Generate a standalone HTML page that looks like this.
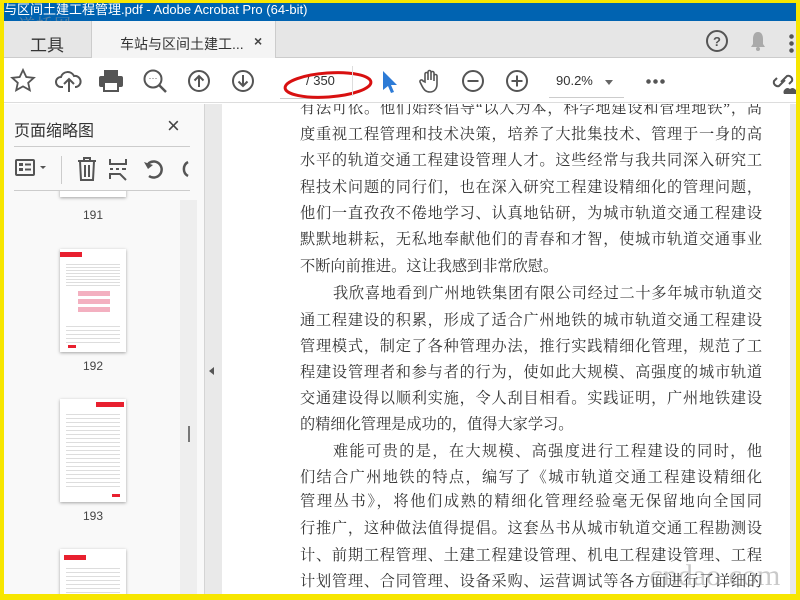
<!DOCTYPE html>
<html><head><meta charset="utf-8"><style>
*{margin:0;padding:0;box-sizing:border-box}
body{width:800px;height:600px;overflow:hidden;background:#f7e600;font-family:"Liberation Sans","Noto Sans CJK SC",sans-serif;position:relative}
.abs{position:absolute}
#win{position:absolute;left:4px;top:3px;width:792px;height:591px;background:#fff;overflow:hidden}
#title{left:0;top:0;width:792px;height:18px;background:#0063b1;color:#fff;font-size:13px;line-height:14px;white-space:nowrap;overflow:hidden}
#tabs{left:0;top:18px;width:792px;height:37px;background:#e6e6e6;border-bottom:1px solid #ccc}
#tb{left:0;top:55px;width:792px;height:45px;background:#fff;border-bottom:1px solid #ddd}
.ic{position:absolute}
#lp{left:0;top:101px;width:200px;height:490px;background:#f9f9f9}
#div{left:200px;top:101px;width:18px;height:490px;background:#e9e9e9;border-left:1px solid #d4d4d4}
#page{left:218px;top:101px;width:568px;height:490px;background:#fff;overflow:hidden}
#rg{left:786px;top:101px;width:6px;height:490px;background:#e9e9e9}
.ln{position:absolute;left:78px;width:462px;height:26px;font-family:"Liberation Serif","Noto Serif CJK SC",serif;font-size:15.2px;line-height:26px;color:#333;text-align:justify;text-align-last:justify;white-space:nowrap}
.nl{text-align-last:left;letter-spacing:0}
.in{padding-left:33px}
.th{position:absolute;left:56px;width:66px;height:103px;background:#fff;box-shadow:0 1px 3px rgba(0,0,0,.35)}
.lbl{position:absolute;left:56px;width:66px;text-align:center;font-size:12px;color:#444}
#list{position:absolute;left:0;top:87px;width:200px;height:403px;overflow:hidden}
</style></head><body>
<div id="win">
<div id="title" class="abs">与区间土建工程管理.pdf - Adobe Acrobat Pro (64-bit)</div>
<div class="abs" style="left:14px;top:8px;font-size:17px;color:#999;font-family:'Noto Serif CJK SC',serif;letter-spacing:1px;opacity:.6">道桥网</div>
<div id="tabs" class="abs">
  <div class="abs" style="left:0;top:0;width:88px;height:37px;border-right:1px solid #ccc"></div>
  <div class="abs" style="left:26px;top:10px;font-size:17px;color:#333">工具</div>
  <div class="abs" style="left:88px;top:0;width:184px;height:38px;background:#f4f4f4;border-right:1px solid #ccc"></div>
  <div class="abs" style="left:116px;top:13px;font-size:14px;color:#333">车站与区间土建工...</div>
  <div class="abs" style="left:250px;top:12px;font-size:14px;color:#444;font-weight:bold">×</div>
  <svg class="ic" style="left:701px;top:8px" width="24" height="24"><circle cx="12" cy="12" r="10" fill="none" stroke="#555" stroke-width="2"/><text x="12" y="17" font-size="13" font-weight="bold" text-anchor="middle" fill="#555" font-family="Liberation Sans">?</text></svg>
  <svg class="ic" style="left:744px;top:9px" width="20" height="22"><path d="M10 2c-4 0-5 4-5 7v5l-2 3h14l-2-3V9c0-3-1-7-5-7z" fill="#aaa"/><circle cx="10" cy="19" r="2" fill="#aaa"/></svg>
  <div class="abs" style="left:785px;top:12px;width:5px;height:20px;background:radial-gradient(circle,#555 2px,transparent 2.5px) 0 0/5px 7px"></div>
</div>
<div id="tb" class="abs">
  <svg class="ic" style="left:6px;top:10px" width="26" height="26"><path d="M13 2l3.3 7 7.5.8-5.6 5 1.6 7.4L13 18.4l-6.8 3.8 1.6-7.4-5.6-5 7.5-.8z" fill="none" stroke="#555" stroke-width="1.8"/></svg>
  <svg class="ic" style="left:51px;top:10px" width="28" height="26"><path d="M8 19H6a5 5 0 0 1 0-10 7 7 0 0 1 13-1 5.5 5.5 0 0 1 2 11h-1" fill="none" stroke="#555" stroke-width="2"/><path d="M14 24V12M9 16l5-5 5 5" fill="none" stroke="#555" stroke-width="2"/></svg>
  <svg class="ic" style="left:94px;top:10px" width="26" height="26"><rect x="6" y="2" width="14" height="6" fill="#555"/><rect x="1" y="8" width="24" height="11" rx="2" fill="#555"/><rect x="6" y="14" width="14" height="9" fill="#fff" stroke="#555" stroke-width="2"/></svg>
  <svg class="ic" style="left:138px;top:10px" width="28" height="28"><circle cx="11" cy="11" r="8.5" fill="none" stroke="#555" stroke-width="2"/><path d="M17 17l7 7" stroke="#555" stroke-width="2.5"/><text x="11" y="13" font-size="9" text-anchor="middle" fill="#555">···</text></svg>
  <svg class="ic" style="left:183px;top:11px" width="24" height="24"><circle cx="12" cy="12" r="10" fill="none" stroke="#555" stroke-width="2"/><path d="M12 18V7M7.5 11.5L12 7l4.5 4.5" fill="none" stroke="#555" stroke-width="2"/></svg>
  <svg class="ic" style="left:227px;top:11px" width="24" height="24"><circle cx="12" cy="12" r="10" fill="none" stroke="#555" stroke-width="2"/><path d="M12 6v11M7.5 12.5L12 17l4.5-4.5" fill="none" stroke="#555" stroke-width="2"/></svg>
  <div class="abs" style="left:276px;top:40px;width:40px;height:1px;background:#ccc"></div>
  <div class="abs" style="left:302px;top:15px;font-size:13px;color:#333">/ 350</div>
  <svg class="ic" style="left:278px;top:10px" width="96" height="34"><ellipse cx="46" cy="17" rx="43" ry="12" fill="none" stroke="#d81010" stroke-width="3" transform="rotate(-4 46 17)"/></svg>
  <div class="abs" style="left:348px;top:8px;width:1px;height:30px;background:#ddd"></div>
  <svg class="ic" style="left:375px;top:11px" width="20" height="26"><path d="M4 2v19l5-4 3 7 3-1-3-7h6z" fill="#2d7bd6"/></svg>
  <svg class="ic" style="left:414px;top:10px" width="26" height="26"><path d="M7 14V6a1.5 1.5 0 0 1 3 0v6V4a1.5 1.5 0 0 1 3 0v8V5a1.5 1.5 0 0 1 3 0v8V8a1.5 1.5 0 0 1 3 0v8c0 5-3 8-7 8s-6-2-8-6l-2-4a1.5 1.5 0 0 1 3-1z" fill="none" stroke="#555" stroke-width="1.6"/></svg>
  <svg class="ic" style="left:457px;top:11px" width="24" height="24"><circle cx="12" cy="12" r="10" fill="none" stroke="#555" stroke-width="2"/><path d="M6.5 12h11" stroke="#555" stroke-width="2"/></svg>
  <svg class="ic" style="left:501px;top:11px" width="24" height="24"><circle cx="12" cy="12" r="10" fill="none" stroke="#555" stroke-width="2"/><path d="M6.5 12h11M12 6.5v11" stroke="#555" stroke-width="2"/></svg>
  <div class="abs" style="left:552px;top:15px;font-size:13px;color:#333">90.2%</div>
  <div class="abs" style="left:601px;top:22px;border:4px solid transparent;border-top:5px solid #666"></div>
  <div class="abs" style="left:545px;top:39px;width:75px;height:1px;background:#ccc"></div>
  <div class="abs" style="left:641px;top:21px;width:20px;height:5px;background:radial-gradient(circle,#555 2px,transparent 2.5px) 0 0/7px 5px"></div>
  <svg class="ic" style="left:768px;top:10px" width="24" height="28"><path d="M9 14l6-6a4 4 0 0 1 5 5l-3 3M13 12l-6 6a4 4 0 0 1-5-5l3-3" fill="none" stroke="#555" stroke-width="2"/><path d="M12 26a4 4 0 0 1 6-5 4 4 0 0 1 6 5z" fill="#555"/></svg>
</div>
<div id="lp" class="abs">
  <div class="abs" style="left:10px;top:13px;font-size:16px;color:#333">页面缩略图</div>
  <div class="abs" style="left:163px;top:9px;font-size:22px;color:#444">×</div>
  <div class="abs" style="left:10px;top:42px;width:176px;height:1px;background:#ccc"></div>
  <svg class="ic" style="left:10px;top:52px" width="36" height="24"><rect x="2" y="4" width="18" height="15" rx="1" fill="none" stroke="#555" stroke-width="2"/><rect x="5" y="7" width="4" height="3" fill="#555"/><rect x="5" y="12" width="4" height="3" fill="#555"/><path d="M11 8.5h6M11 13.5h6" stroke="#555" stroke-width="2"/><path d="M26 10l3 3 3-3z" fill="#555"/></svg>
  <div class="abs" style="left:57px;top:52px;width:1px;height:28px;background:#ccc"></div>
  <svg class="ic" style="left:72px;top:52px" width="22" height="26"><path d="M2 5h18M8 5V2h6v3M4 5l1 19h12l1-19M9 9v12M13 9v12" fill="none" stroke="#555" stroke-width="2"/></svg>
  <svg class="ic" style="left:104px;top:53px" width="22" height="24"><path d="M2 2v5h16V2M2 22v-5h10l6 6M2 12h3M8 12h3M14 12h4" fill="none" stroke="#555" stroke-width="2"/></svg>
  <svg class="ic" style="left:138px;top:54px" width="24" height="22"><path d="M7 18a8 8 0 1 0 0-13L5 8" fill="none" stroke="#555" stroke-width="2.5"/><path d="M2 4l4 7 5-4z" fill="#555"/></svg>
  <svg class="ic" style="left:172px;top:54px" width="14" height="22"><path d="M12 4a8 8 0 0 0 0 14" fill="none" stroke="#555" stroke-width="2.5"/></svg>
  <div class="abs" style="left:10px;top:86px;width:176px;height:1px;background:#ccc"></div>
  <div id="list">
  <div class="abs" style="left:176px;top:9px;width:17px;height:394px;background:#eee"></div>
  <div class="abs" style="left:184px;top:235px;width:2px;height:16px;background:#777"></div>
  <div class="th" style="top:-30px;height:36px"></div>
  <div class="lbl" style="top:17px">191</div>
  <div class="th" style="top:58px"><div class="abs" style="left:0;top:3px;width:22px;height:5px;background:#e8202f"></div><div class="abs" style="left:6px;top:13px;width:54px;height:24px;background:repeating-linear-gradient(#fff 0 2px,#ddd 2px 3px)"></div><div class="abs" style="left:18px;top:42px;width:32px;height:24px;background:repeating-linear-gradient(#f3b0c0 0 5px,#fff 5px 8px)"></div><div class="abs" style="left:6px;top:74px;width:54px;height:20px;background:repeating-linear-gradient(#fff 0 3px,#ddd 3px 4px)"></div><div class="abs" style="left:8px;top:96px;width:8px;height:3px;background:#e8202f"></div></div>
  <div class="lbl" style="top:168px">192</div>
  <div class="th" style="top:208px"><div class="abs" style="left:36px;top:3px;width:28px;height:5px;background:#e8202f"></div><div class="abs" style="left:6px;top:12px;width:54px;height:76px;background:repeating-linear-gradient(#fff 0 3px,#ddd 3px 4px)"></div><div class="abs" style="left:52px;top:95px;width:8px;height:3px;background:#e8202f"></div></div>
  <div class="lbl" style="top:318px">193</div>
  <div class="th" style="top:358px"><div class="abs" style="left:4px;top:6px;width:22px;height:5px;background:#e8202f"></div><div class="abs" style="left:6px;top:16px;width:54px;height:60px;background:repeating-linear-gradient(#fff 0 3px,#ddd 3px 4px)"></div></div>
  </div>
</div>
<div id="div" class="abs"><div class="abs" style="left:4px;top:263px;border:4px solid transparent;border-right:5px solid #555;border-left:0"></div></div>
<div id="page" class="abs">
<div class="ln" style="top:-8px">有法可依。他们始终倡导“以人为本，科学地建设和管理地铁”，高</div>
<div class="ln" style="top:18px">度重视工程管理和技术决策，培养了大批集技术、管理于一身的高</div>
<div class="ln" style="top:44px">水平的轨道交通工程建设管理人才。这些经常与我共同深入研究工</div>
<div class="ln" style="top:71px">程技术问题的同行们，也在深入研究工程建设精细化的管理问题，</div>
<div class="ln" style="top:97px">他们一直孜孜不倦地学习、认真地钻研，为城市轨道交通工程建设</div>
<div class="ln" style="top:123px">默默地耕耘，无私地奉献他们的青春和才智，使城市轨道交通事业</div>
<div class="ln nl" style="top:150px">不断向前推进。这让我感到非常欣慰。</div>
<div class="ln in" style="top:177px">我欣喜地看到广州地铁集团有限公司经过二十多年城市轨道交</div>
<div class="ln" style="top:204px">通工程建设的积累，形成了适合广州地铁的城市轨道交通工程建设</div>
<div class="ln" style="top:230px">管理模式，制定了各种管理办法，推行实践精细化管理，规范了工</div>
<div class="ln" style="top:256px">程建设管理者和参与者的行为，使如此大规模、高强度的城市轨道</div>
<div class="ln" style="top:282px">交通建设得以顺利实施，令人刮目相看。实践证明，广州地铁建设</div>
<div class="ln nl" style="top:308px">的精细化管理是成功的，值得大家学习。</div>
<div class="ln in" style="top:335px">难能可贵的是，在大规模、高强度进行工程建设的同时，他</div>
<div class="ln" style="top:361px">们结合广州地铁的特点，编写了《城市轨道交通工程建设精细化</div>
<div class="ln" style="top:385px">管理丛书》，将他们成熟的精细化管理经验毫无保留地向全国同</div>
<div class="ln" style="top:412px">行推广，这种做法值得提倡。这套丛书从城市轨道交通工程勘测设</div>
<div class="ln" style="top:439px">计、前期工程管理、土建工程建设管理、机电工程建设管理、工程</div>
<div class="ln" style="top:465px">计划管理、合同管理、设备采购、运营调试等各方面进行了详细的</div>
<div class="abs" style="left:420px;top:455px;font-size:30px;color:rgba(120,120,120,.4);font-family:'Liberation Serif',serif">.cndao.com</div>
</div>
<div id="rg" class="abs"></div>
</div>
</body></html>
